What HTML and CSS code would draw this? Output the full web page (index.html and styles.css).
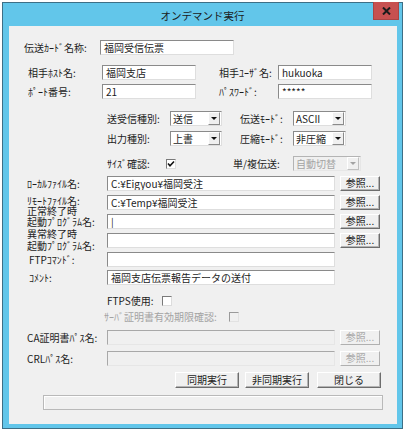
FILE: index.html
```html
<!DOCTYPE html>
<html lang="ja">
<head>
  <meta charset="UTF-8">
  <title>オンデマンド実行</title>
  <link rel="stylesheet" href="styles.css">
</head>
<body>
  <div class="window">
    <div class="titlebar">
      <span></span>
      <span class="title">オンデマンド実行</span>
      <span class="close">
        <svg width="9" height="8" viewBox="0 0 9 8"><path d="M1 0.5 L8 7.5 M8 0.5 L1 7.5" stroke="#1a1a1a" stroke-width="2"/></svg>
      </span>
    </div>

    <div class="client">
      <!-- header fields -->
      <div class="row r-card">
        <span class="lbl w76">伝送ｶｰﾄﾞ名称:</span>
        <div class="edit w134">福岡受信伝票</div>
      </div>
      <div class="row r-host">
        <span class="lbl w74">相手ﾎｽﾄ名:</span>
        <div class="edit w94">福岡支店</div>
        <span class="lbl lbl-right w59">相手ﾕｰｻﾞ名:</span>
        <div class="edit w94">hukuoka</div>
      </div>
      <div class="row r-port">
        <span class="lbl w74">ﾎﾟｰﾄ番号:</span>
        <div class="edit w94">21</div>
        <span class="lbl lbl-right w59">ﾊﾟｽﾜｰﾄﾞ:</span>
        <div class="edit w94">*****</div>
      </div>

      <!-- transfer options -->
      <div class="row r-opt1">
        <span class="lbl w63">送受信種別:</span>
        <div class="combo w52"><span class="combo-text">送信</span><span class="drop"></span></div>
        <span class="lbl lbl-mode w53">伝送ﾓｰﾄﾞ:</span>
        <div class="combo w53"><span class="combo-text">ASCII</span><span class="drop"></span></div>
      </div>
      <div class="row r-opt2">
        <span class="lbl w63">出力種別:</span>
        <div class="combo w52"><span class="combo-text">上書</span><span class="drop"></span></div>
        <span class="lbl lbl-mode w53">圧縮ﾓｰﾄﾞ:</span>
        <div class="combo w53"><span class="combo-text">非圧縮</span><span class="drop"></span></div>
      </div>
      <div class="row r-opt3">
        <span class="lbl w59">ｻｲｽﾞ確認:</span>
        <span class="check checked">
          <svg width="8" height="8" viewBox="0 0 8 8"><path d="M1 3.5 L3 5.8 L7 1.5" stroke="#111" stroke-width="1.6" fill="none"/></svg>
        </span>
        <span class="lbl lbl-single w60">単/複伝送:</span>
        <div class="combo combo-off w68"><span class="combo-text">自動切替</span><span class="drop"></span></div>
      </div>

      <!-- file fields -->
      <div class="row r-file">
        <span class="lbl w80">ﾛｰｶﾙﾌｧｲﾙ名:</span>
        <div class="edit w228">C:¥Eigyou¥福岡受注</div>
        <span class="btn">参照...</span>
      </div>
      <div class="row">
        <span class="lbl lbl-up w80">ﾘﾓｰﾄﾌｧｲﾙ名:</span>
        <div class="edit w228">C:¥Temp¥福岡受注</div>
        <span class="btn">参照...</span>
      </div>
      <div class="row">
        <span class="lbl lbl-two lbl-ok w80"><span class="line">正常終了時</span><span class="line">起動ﾌﾟﾛｸﾞﾗﾑ名:</span></span>
        <div class="edit w228">|</div>
        <span class="btn">参照...</span>
      </div>
      <div class="row">
        <span class="lbl lbl-two lbl-ng w80"><span class="line">異常終了時</span><span class="line">起動ﾌﾟﾛｸﾞﾗﾑ名:</span></span>
        <div class="edit w228"></div>
        <span class="btn">参照...</span>
      </div>
      <div class="row">
        <span class="lbl lbl-pad w80">FTPｺﾏﾝﾄﾞ:</span>
        <div class="edit w228"></div>
      </div>
      <div class="row r-comment">
        <span class="lbl lbl-pad w80">ｺﾒﾝﾄ:</span>
        <div class="edit w228">福岡支店伝票報告データの送付</div>
      </div>

      <!-- FTPS -->
      <div class="row r-ftps">
        <span class="lbl w55">FTPS使用:</span>
        <span class="check"></span>
      </div>
      <div class="row r-cert">
        <span class="lbl lbl-off w125">ｻｰﾊﾞ証明書有効期限確認:</span>
        <span class="check check-off"></span>
      </div>
      <div class="row r-ca">
        <span class="lbl w80">CA証明書ﾊﾟｽ名:</span>
        <div class="edit edit-off w228"></div>
        <span class="btn btn-off">参照...</span>
      </div>
      <div class="row r-crl">
        <span class="lbl w80">CRLﾊﾟｽ名:</span>
        <div class="edit edit-off w228"></div>
        <span class="btn btn-off">参照...</span>
      </div>

      <!-- actions -->
      <div class="actions">
        <span class="btn btn-wide">同期実行</span>
        <span class="btn btn-wide">非同期実行</span>
        <span class="btn btn-wide btn-close">閉じる</span>
      </div>
      <div class="status"></div>
    </div>
  </div>
</body>
</html>
```

FILE: styles.css
```css
body {
  margin: 0;
  background: #ffffff;
  font-family: "Noto Sans CJK JP", sans-serif;
  font-size: 10px;
  color: #1c1c1c;
}

.window {
  margin: 2px 0 0 2px;
  width: 401px;
  height: 427px;
  box-sizing: border-box;
  border: 1px solid #3d6f86;
  background: #62c6ea;
  display: flex;
  flex-direction: column;
}

.titlebar {
  height: 23px;
  display: grid;
  grid-template-columns: 1fr auto 1fr;
  align-items: center;
}

.title {
  font-size: 10.5px;
  color: #1a1a1a;
  padding-top: 1px;
}

.close {
  justify-self: end;
  align-self: start;
  margin: -1px 3px 0 0;
  width: 26px;
  height: 18px;
  background: #c75050;
  border: 1px solid #a94444;
  border-top: none;
  box-sizing: border-box;
  display: flex;
  align-items: center;
  justify-content: center;
}

.client {
  flex: 1;
  margin: 0 5px 4px 6px;
  background: #f0f0f0;
  padding-top: 14px;
  display: flex;
  flex-direction: column;
}

/* rows */
.row {
  display: flex;
  align-items: center;
  height: 15px;
  margin-top: 4px;
  padding-left: 18px;
  flex-shrink: 0;
}

.r-card { margin-top: 0; padding-left: 15px; }
.r-host { margin-top: 10px; padding-left: 19px; }
.r-port { padding-left: 19px; }
.r-opt1 { margin-top: 12px; padding-left: 98px; }
.r-opt2 { margin-top: 5px; padding-left: 98px; }
.r-opt3 { margin-top: 10px; padding-left: 98px; }
.r-file { margin-top: 5px; }
.r-comment { margin-top: 3px; }
.r-ftps { margin-top: 8px; padding-left: 98px; }
.r-cert { margin-top: 1px; padding-left: 95px; }
.r-ca { margin-top: 6px; }
.r-crl { margin-top: 6px; }

.lbl {
  flex-shrink: 0;
  white-space: nowrap;
  line-height: 10px;
}

.lbl-up { padding-bottom: 4px; }
.lbl-right { margin-left: 23px; }
.lbl-mode { margin-left: 18px; }
.lbl-single { margin-left: 57px; }
.lbl-pad { padding-left: 2px; box-sizing: border-box; }
.lbl-off { color: #a3a3a3; }

/* two line labels */
.lbl-two {
  align-self: flex-end;
  display: flex;
  flex-direction: column;
}

.lbl-two .line {
  display: block;
  height: 11px;
  line-height: 11px;
}

.lbl-ok { margin-bottom: 2px; }
.lbl-ng { margin-bottom: -4px; }
.lbl-ng .line { height: 12px; line-height: 12px; }

.w52 { width: 52px; }
.w53 { width: 53px; }
.w55 { width: 55px; }
.w59 { width: 59px; }
.w60 { width: 60px; }
.w63 { width: 63px; }
.w68 { width: 68px; }
.w74 { width: 74px; }
.w76 { width: 76px; }
.w80 { width: 80px; }
.w94 { width: 94px; }
.w125 { width: 125px; }
.w134 { width: 134px; }
.w228 { width: 228px; }

/* edit boxes */
.edit {
  box-sizing: border-box;
  height: 15px;
  background: #ffffff;
  border: 1px solid;
  border-color: #8a8a8a #dedede #dedede #8a8a8a;
  padding: 0 3px;
  line-height: 13px;
  white-space: nowrap;
  overflow: hidden;
  flex-shrink: 0;
}

.edit-off {
  background: #f0f0f0;
  border-color: #a8a8a8 #e6e6e6 #e6e6e6 #a8a8a8;
}

/* combo boxes */
.combo {
  box-sizing: border-box;
  height: 15px;
  background: #ffffff;
  border: 1px solid;
  border-color: #8a8a8a #dedede #dedede #8a8a8a;
  display: flex;
  align-items: stretch;
  flex-shrink: 0;
}

.combo-text {
  flex: 1;
  padding-left: 2px;
  line-height: 13px;
  white-space: nowrap;
}

.drop {
  width: 12px;
  margin: 0 1px 0 0;
  background: #f0f0f0;
  border: 1px solid;
  border-color: #ffffff #8a8a8a #8a8a8a #ffffff;
  box-sizing: border-box;
  display: flex;
  align-items: center;
  justify-content: center;
}

.drop::after {
  content: "";
  border-left: 3px solid transparent;
  border-right: 3px solid transparent;
  border-top: 3px solid #111;
}

.combo-off {
  background: #f0f0f0;
  border-color: #b4b4b4 #e6e6e6 #e6e6e6 #b4b4b4;
  color: #a3a3a3;
}

.combo-off .drop {
  border-color: #ffffff #c0c0c0 #c0c0c0 #ffffff;
}

.combo-off .drop::after {
  border-top-color: #a3a3a3;
}

/* check boxes */
.check {
  box-sizing: border-box;
  width: 10px;
  height: 10px;
  background: #ffffff;
  border: 1px solid;
  border-color: #7a7a7a #dcdcdc #dcdcdc #7a7a7a;
  display: flex;
  align-items: center;
  justify-content: center;
  flex-shrink: 0;
}

.check-off {
  background: #f0f0f0;
  border-color: #9a9a9a #e2e2e2 #e2e2e2 #9a9a9a;
}

/* buttons */
.btn {
  box-sizing: border-box;
  width: 40px;
  height: 15px;
  margin-left: 5px;
  background: #f0f0f0;
  border: 1px solid;
  border-color: #ffffff #6d6d6d #6d6d6d #ffffff;
  box-shadow: inset -1px -1px #b4b4b4;
  text-align: center;
  line-height: 12px;
  flex-shrink: 0;
}

.btn-off {
  color: #a8a8a8;
  border-color: #ffffff #b0b0b0 #b0b0b0 #ffffff;
  box-shadow: none;
}

.actions {
  display: flex;
  margin-top: 6px;
  padding-left: 166px;
  flex-shrink: 0;
}

.btn-wide {
  width: 64px;
  height: 16px;
  margin-left: 0;
  margin-right: 6px;
  line-height: 13px;
}

.btn-close { margin-left: 2px; }

.status {
  margin: 7px 0 0 34px;
  width: 340px;
  height: 15px;
  box-sizing: border-box;
  border: 1px solid #b9b9b9;
  box-shadow: inset 1px 1px #ffffff;
  flex-shrink: 0;
}
```
